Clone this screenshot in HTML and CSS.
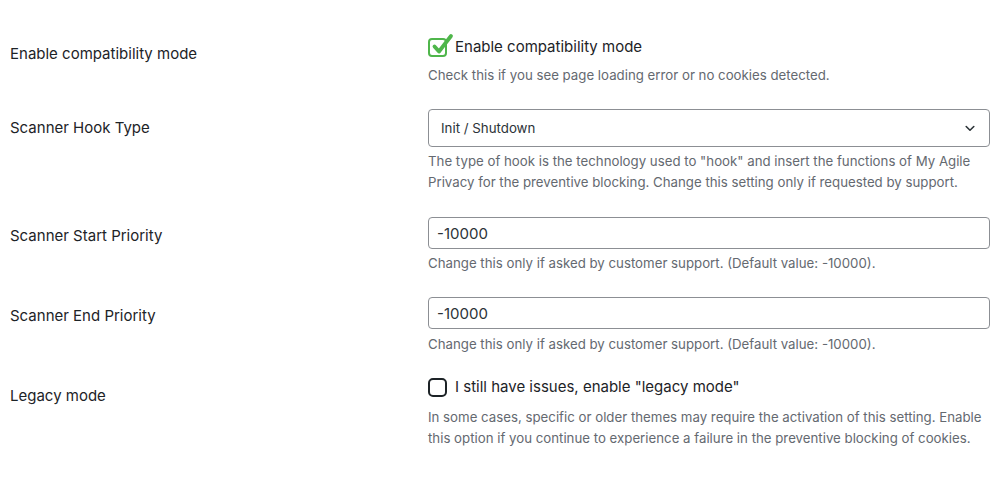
FILE: index.html
```html
<!DOCTYPE html>
<html lang="en">
<head>
<meta charset="utf-8">
<title>Settings</title>
<link rel="stylesheet" href="styles.css">
</head>
<body>
<div class="form">
  <div class="row row-1">
    <div class="label">Enable compatibility mode</div>
    <div class="field">
      <label class="check">
        <span class="box checked">
          <svg class="tick" viewBox="0 0 26 26" width="26" height="26"><path d="M5.5 13.5 L10 18.5 L22 3" fill="none" stroke="#4fb64b" stroke-width="3.8" stroke-linecap="round" stroke-linejoin="round"/></svg>
        </span>
        <span class="check-text">Enable compatibility mode</span>
      </label>
      <p class="desc">Check this if you see page loading error or no cookies detected.</p>
    </div>
  </div>
  <div class="row row-2">
    <div class="label">Scanner Hook Type</div>
    <div class="field">
      <div class="select">
        <span>Init / Shutdown</span>
        <svg class="chev" viewBox="0 0 10 7" width="10" height="7"><path d="M1.2 1.5 L5 5.2 L8.8 1.5" fill="none" stroke="#2c3338" stroke-width="1.6" stroke-linecap="round" stroke-linejoin="round"/></svg>
      </div>
      <p class="desc">The type of hook is the technology used to "hook" and insert the functions of My Agile Privacy for the preventive blocking. Change this setting only if requested by support.</p>
    </div>
  </div>
  <div class="row row-3">
    <div class="label">Scanner Start Priority</div>
    <div class="field">
      <div class="input">-10000</div>
      <p class="desc">Change this only if asked by customer support. (Default value: -10000).</p>
    </div>
  </div>
  <div class="row row-4">
    <div class="label">Scanner End Priority</div>
    <div class="field">
      <div class="input">-10000</div>
      <p class="desc">Change this only if asked by customer support. (Default value: -10000).</p>
    </div>
  </div>
  <div class="row row-5">
    <div class="label">Legacy mode</div>
    <div class="field">
      <label class="check">
        <span class="box"></span>
        <span class="check-text">I still have issues, enable "legacy mode"</span>
      </label>
      <p class="desc">In some cases, specific or older themes may require the activation of this setting. Enable this option if you continue to experience a failure in the preventive blocking of cookies.</p>
    </div>
  </div>
</div>
</body>
</html>
```
FILE: styles.css
```css
html, body {
  margin: 0;
  padding: 0;
  background: #ffffff;
}
body {
  font-family: "Inter", "Liberation Sans", sans-serif;
  color: #1d2327;
}
.form {
  display: flex;
  flex-direction: column;
  padding-top: 35px;
}
.row {
  display: grid;
  grid-template-columns: 428px 562px;
  padding-bottom: 24px;
}
.label {
  padding-left: 10px;
  padding-top: 9px;
  font-size: 15px;
  line-height: 20px;
  color: #1d2327;
}
.field {
  display: flex;
  flex-direction: column;
}
.check {
  display: flex;
  align-items: center;
  gap: 8px;
  height: 22px;
}
.box {
  position: relative;
  box-sizing: border-box;
  width: 19px;
  height: 19px;
  border: 2.5px solid #1d2327;
  border-radius: 5px;
  flex: none;
  margin-top: 3px;
}
.box.checked {
  border-color: #4fb64b;
  border-radius: 4px;
}
.tick {
  position: absolute;
  left: -1px;
  top: -7px;
}
.check-text {
  font-size: 15px;
  color: #1d2327;
  line-height: 22px;
  margin-top: 2px;
}
.desc {
  margin: 8px 0 0;
  font-size: 13.25px;
  line-height: 21px;
  color: #646970;
}
.select {
  box-sizing: border-box;
  height: 38px;
  border: 1px solid #8c8f94;
  border-radius: 4px;
  display: flex;
  align-items: center;
  justify-content: space-between;
  padding: 0 14px 0 12px;
  font-size: 13.3px;
  color: #2c3338;
}
.input {
  box-sizing: border-box;
  height: 32px;
  border: 1px solid #8c8f94;
  border-radius: 4px;
  display: flex;
  align-items: center;
  padding: 0 8px;
  font-size: 15px;
  color: #2c3338;
}
.row-1 {
  padding-bottom: 23px;
}
.row-2 .desc {
  margin-top: 4px;
}
.row-3 .desc {
  margin-top: 4px;
}
.row-3 {
  padding-bottom: 23px;
}
.row-4 .desc {
  margin-top: 5px;
}
.row-4 {
  padding-bottom: 20px;
}
.row-5 .label {
  padding-top: 11px;
}
.row-5 .desc {
  margin-top: 10px;
}
```
